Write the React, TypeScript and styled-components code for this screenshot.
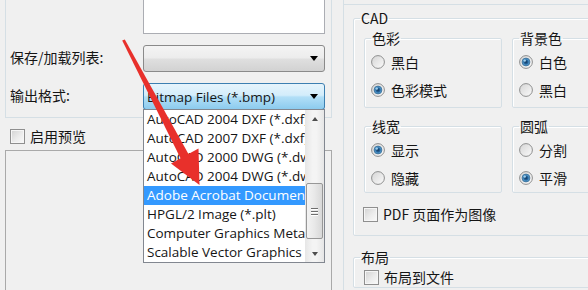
import React from 'react';
import styled, { createGlobalStyle, css } from 'styled-components';

const GlobalStyle = createGlobalStyle`
  html, body {
    margin: 0;
    padding: 0;
    background: #f0f0f0;
  }
  body {
    font-family: "Open Sans", "Noto Sans CJK SC", sans-serif;
    font-size: 14px;
    color: #151515;
  }
  * {
    box-sizing: border-box;
  }
`;

// chinese labels read better when the CJK face sets the line metrics
const cjkText = css`
  font-family: "Noto Sans CJK SC", "Open Sans", sans-serif;
  font-size: 14px;
  white-space: nowrap;
`;

const Screen = styled.div`
  position: relative;
  display: flex;
  width: 588px;
  height: 290px;
  overflow: hidden;
  background: #f0f0f0;
`;

/* ---------- left side ---------- */

const LeftPane = styled.div`
  flex: none;
  width: 343px;
  padding: 0 11px 0 5px;
  display: flex;
  flex-direction: column;
`;

const TopGroup = styled.div`
  height: 118px;
  padding: 0 6px 0 4px;
  border: 1px solid #d5dfe5;
  border-top: none;
  display: flex;
  flex-direction: column;
`;

const TextBox = styled.div`
  align-self: flex-end;
  width: 182px;
  height: 34px;
  background: #fff;
  border: 1px solid #abadb3;
  border-top: none;
`;

const FieldRow = styled.div`
  display: flex;
  align-items: center;
  justify-content: space-between;
  margin-top: 11px;
  height: 27px;
`;

const Label = styled.span`
  ${cjkText}
  padding-bottom: 4px;
`;

const Combo = styled.div<{ $open?: boolean }>`
  position: relative;
  width: 182px;
  height: 27px;
  padding: 0 6px 0 3px;
  display: flex;
  align-items: center;
  justify-content: space-between;
  border: 1px solid ${p => (p.$open ? '#3c7fb1' : '#8a8a8a')};
  border-radius: 3px;
  background: ${p =>
    p.$open
      ? 'linear-gradient(#e6f4fc 0%, #d3edfb 45%, #b2dff7 52%, #8ccbee 100%)'
      : 'linear-gradient(#f4f4f4 0%, #ececec 48%, #dfdfdf 52%, #d2d2d2 100%)'};
  font-size: 13.5px;
  white-space: nowrap;
`;

const ComboArrow = styled.span`
  width: 0;
  height: 0;
  border-left: 4px solid transparent;
  border-right: 4px solid transparent;
  border-top: 5px solid #000;
`;

const DropList = styled.div`
  position: absolute;
  top: 100%;
  left: -1px;
  width: 182px;
  height: 154px;
  display: flex;
  background: #fff;
  border: 1px solid #828790;
  z-index: 2;
`;

const ItemList = styled.div`
  flex: 1;
  min-width: 0;
  display: flex;
  flex-direction: column;
`;

const Item = styled.div<{ $selected?: boolean }>`
  height: 19px;
  line-height: 19px;
  padding-left: 3px;
  font-size: 13.5px;
  white-space: nowrap;
  overflow: hidden;
  color: ${p => (p.$selected ? '#fff' : '#151515')};
  background: ${p => (p.$selected ? '#3399ff' : 'transparent')};
`;

const ScrollBar = styled.div`
  flex: none;
  width: 19px;
  display: flex;
  flex-direction: column;
  background: linear-gradient(90deg, #e6e6e6, #f4f4f4 40%, #f4f4f4 60%, #e6e6e6);
`;

const ScrollButton = styled.div`
  height: 17px;
  display: flex;
  align-items: center;
  justify-content: center;
`;

const ScrollArrow = styled.span<{ $up?: boolean }>`
  width: 0;
  height: 0;
  border-left: 3.5px solid transparent;
  border-right: 3.5px solid transparent;
  ${p => (p.$up ? 'border-bottom: 4px solid #4e4e4e;' : 'border-top: 4px solid #4e4e4e;')}
`;

const Track = styled.div`
  flex: 1;
  padding: 56px 1px 0 1px;
`;

const Thumb = styled.div`
  height: 56px;
  border: 1px solid #979797;
  border-radius: 2px;
  background: linear-gradient(90deg, #f3f3f3, #e8e8e8 50%, #d8d8d8);
  display: flex;
  flex-direction: column;
  align-items: center;
  justify-content: center;
  gap: 2px;
`;

const Grip = styled.span`
  width: 7px;
  height: 1px;
  background: #6e6e6e;
  box-shadow: 0 1px 0 #fff;
`;

const CheckRow = styled.div<{ $mt: number; $pl: number }>`
  ${cjkText}
  display: flex;
  align-items: center;
  gap: 5px;
  height: 20px;
  margin-top: ${p => p.$mt}px;
  padding-left: ${p => p.$pl}px;
`;

const CheckBox = styled.span`
  flex: none;
  width: 15px;
  height: 15px;
  border: 1px solid #8f8f8f;
  background: linear-gradient(135deg, #d2d2d2 0%, #ececec 55%, #fafafa 100%);
  box-shadow: inset 0 0 0 1px #f6f6f6;
`;

const PreviewPanel = styled.div`
  flex: 1;
  margin-top: 4px;
  border: 1px solid #a9a9a9;
  border-bottom: none;
`;

/* ---------- right side ---------- */

const RightPane = styled.div`
  flex: none;
  width: 400px;
  padding-left: 9px;
  border-left: 1px solid #d5dfe5;
  display: flex;
  flex-direction: column;
`;

const TopStub = styled.div`
  height: 5px;
  margin-left: -9px;
  border-bottom: 1px solid #d5dfe5;
`;

const Group = styled.fieldset<{ $w?: number; $mt?: number }>`
  margin: ${p => p.$mt ?? 0}px 0 0 0;
  padding: 0;
  min-width: 0;
  width: ${p => (p.$w ? `${p.$w}px` : 'auto')};
  border: 1px solid #d5dfe5;
  border-radius: 2px;
  box-shadow: inset 1px 1px 0 #fff;
`;

const Legend = styled.legend`
  ${cjkText}
  margin-left: 6px;
  padding: 0 1px;
  height: 18px;
  line-height: 18px;
`;

const SubGrid = styled.div`
  display: grid;
  grid-template-columns: 138px 138px;
  column-gap: 10px;
  row-gap: 9px;
  margin-top: 2px;
  padding-left: 10px;
`;

const RadioList = styled.div<{ $pb: number }>`
  padding: 1px 0 ${p => p.$pb}px 6px;
`;

const RadioRow = styled.div`
  ${cjkText}
  display: flex;
  align-items: center;
  gap: 6px;
  height: 28px;
`;

const CadBody = styled.div`
  padding-bottom: 11px;
`;

const RadioMark: React.FC<{ on?: boolean }> = ({ on }) => (
  <svg width="14" height="14" viewBox="0 0 14 14">
    <defs>
      <linearGradient id="rbg" x1="0" y1="0" x2="1" y2="1">
        <stop offset="0" stopColor="#d4d4d4" />
        <stop offset="1" stopColor="#fbfbfb" />
      </linearGradient>
      <radialGradient id="rdot" cx="0.5" cy="0.5" r="0.5">
        <stop offset="0" stopColor="#0f3559" />
        <stop offset="0.55" stopColor="#2a6aa3" />
        <stop offset="1" stopColor="#7ac8f2" />
      </radialGradient>
    </defs>
    <circle cx="7" cy="7" r="6.4" fill="url(#rbg)" stroke="#8e8f8f" strokeWidth="1" />
    {on && <circle cx="7" cy="7" r="3.9" fill="url(#rdot)" stroke="#1d4d7a" strokeWidth="0.7" />}
    {on && <circle cx="5.8" cy="5.6" r="1.2" fill="#bfe8ff" opacity="0.8" />}
  </svg>
);

const Radio: React.FC<{ on?: boolean; label: string }> = ({ on, label }) => (
  <RadioRow>
    <RadioMark on={on} />
    <span>{label}</span>
  </RadioRow>
);

const ArrowLayer = styled.svg`
  position: absolute;
  left: 0;
  top: 0;
  pointer-events: none;
  z-index: 5;
`;

const formats = [
  'AutoCAD 2004 DXF (*.dxf)',
  'AutoCAD 2007 DXF (*.dxf)',
  'AutoCAD 2000 DWG (*.dwg)',
  'AutoCAD 2004 DWG (*.dwg)',
  'Adobe Acrobat Document (*.pdf)',
  'HPGL/2 Image (*.plt)',
  'Computer Graphics Metafile (*.cgm)',
  'Scalable Vector Graphics (*.svg)',
];

const App: React.FC = () => {
  return (
    <>
      <GlobalStyle />
      <Screen>
        <LeftPane>
          <TopGroup>
            <TextBox />
            <FieldRow>
              <Label>保存/加载列表:</Label>
              <Combo>
                <span />
                <ComboArrow />
              </Combo>
            </FieldRow>
            <FieldRow>
              <Label>输出格式:</Label>
              <Combo $open>
                <span>Bitmap Files (*.bmp)</span>
                <ComboArrow />
                <DropList>
                  <ItemList>
                    {formats.map(f => (
                      <Item key={f} $selected={f.startsWith('Adobe')}>
                        {f}
                      </Item>
                    ))}
                  </ItemList>
                  <ScrollBar>
                    <ScrollButton>
                      <ScrollArrow $up />
                    </ScrollButton>
                    <Track>
                      <Thumb>
                        <Grip />
                        <Grip />
                        <Grip />
                      </Thumb>
                    </Track>
                    <ScrollButton>
                      <ScrollArrow />
                    </ScrollButton>
                  </ScrollBar>
                </DropList>
              </Combo>
            </FieldRow>
          </TopGroup>
          <CheckRow $mt={8} $pl={5}>
            <CheckBox />
            <span>启用预览</span>
          </CheckRow>
          <PreviewPanel />
        </LeftPane>

        <RightPane>
          <TopStub />
          <Group $w={300} $mt={4}>
            <Legend>CAD</Legend>
            <CadBody>
              <SubGrid>
                <Group>
                  <Legend>色彩</Legend>
                  <RadioList $pb={3}>
                    <Radio label="黑白" />
                    <Radio on label="色彩模式" />
                  </RadioList>
                </Group>
                <Group>
                  <Legend>背景色</Legend>
                  <RadioList $pb={3}>
                    <Radio on label="白色" />
                    <Radio label="黑白" />
                  </RadioList>
                </Group>
                <Group>
                  <Legend>线宽</Legend>
                  <RadioList $pb={0}>
                    <Radio on label="显示" />
                    <Radio label="隐藏" />
                  </RadioList>
                </Group>
                <Group>
                  <Legend>圆弧</Legend>
                  <RadioList $pb={0}>
                    <Radio label="分割" />
                    <Radio on label="平滑" />
                  </RadioList>
                </Group>
              </SubGrid>
              <CheckRow $mt={11} $pl={9}>
                <CheckBox />
                <span>PDF 页面作为图像</span>
              </CheckRow>
            </CadBody>
          </Group>
          <Group $w={300} $mt={12}>
            <Legend>布局</Legend>
            <CheckRow $mt={1} $pl={10}>
              <CheckBox />
              <span>布局到文件</span>
            </CheckRow>
          </Group>
        </RightPane>

        <ArrowLayer width="588" height="290" viewBox="0 0 588 290">
          <polygon
            points="122.2,40.5 124.8,39.5 189,155 181,159.3"
            fill="#e8302b"
          />
          <polygon points="199.5,185 171,163.5 198.5,148.5" fill="#e8302b" />
        </ArrowLayer>
      </Screen>
    </>
  );
};

export default App;
